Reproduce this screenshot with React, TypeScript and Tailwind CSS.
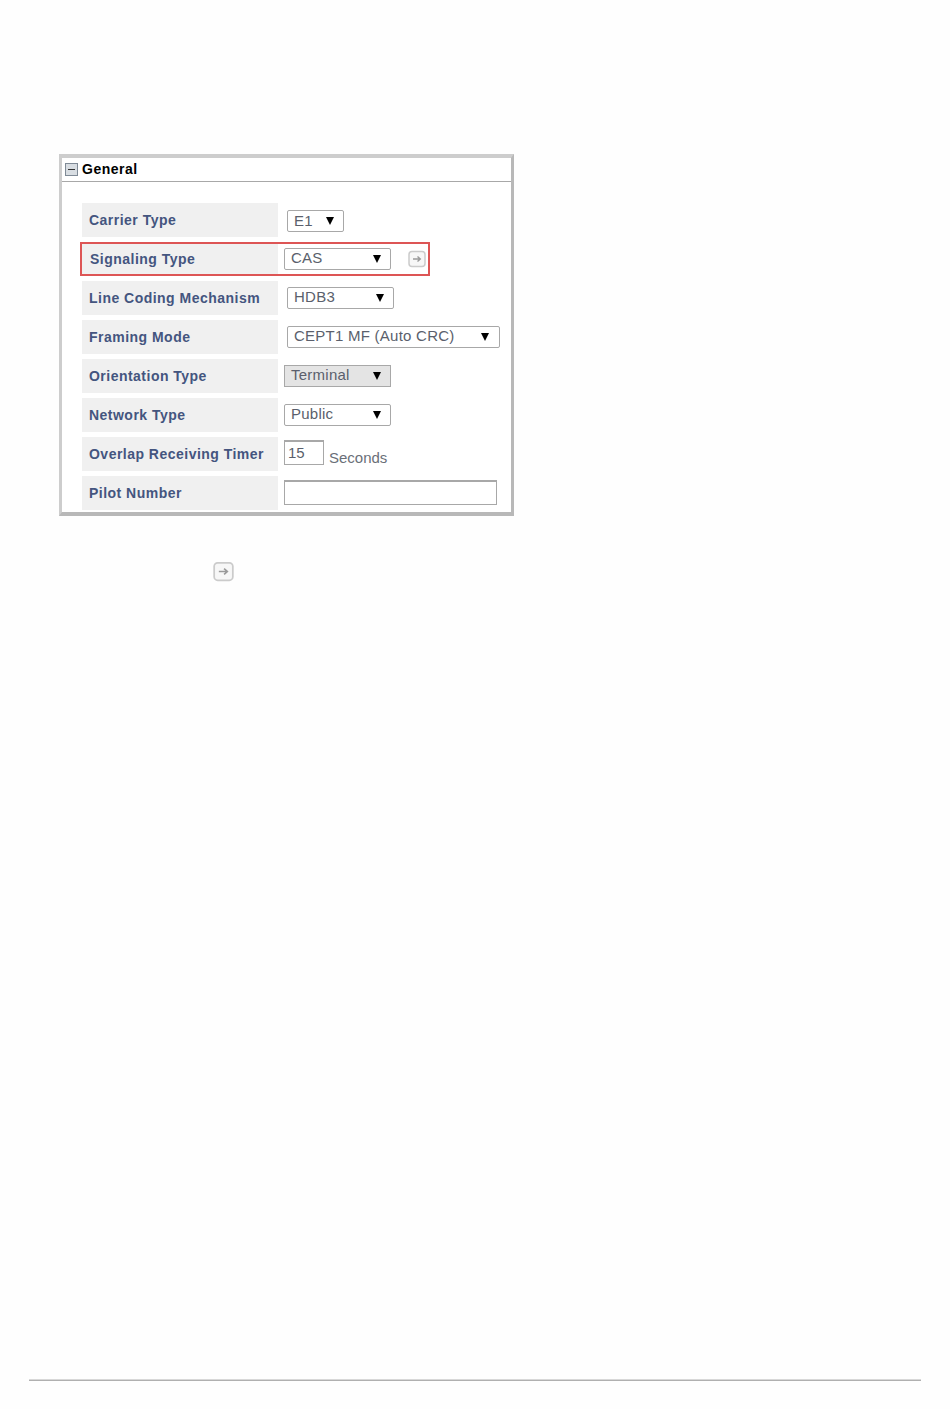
const font = "font-['Liberation_Sans',Arial,sans-serif]";

function Arrow() {
  return <span className="ml-auto w-0 h-0 border-l-[4px] border-r-[4px] border-t-[8px] border-l-transparent border-r-transparent border-t-black" />;
}

function Select({ value, className, textClass = "-mt-[1px]" }: { value: string; className: string; textClass?: string }) {
  return (
    <div className={`h-[22px] flex items-center pl-[6px] border border-[#a8a8a8] rounded-[2px] text-[15px] tracking-[0.25px] text-[#5a5f6c] ${className}`}>
      <span className={textClass}>{value}</span>
      <Arrow />
    </div>
  );
}

function GoIcon({ size, className }: { size: number; className?: string }) {
  return (
    <svg width={size} height={size} viewBox="0 0 18 18" className={className}>
      <rect x="1" y="1.5" width="16" height="15" rx="3" fill="#f7f7f7" stroke="#cbcbcb" strokeWidth="1.5" />
      <path d="M5 9H12M9.5 6.5L12.3 9L9.5 11.5" fill="none" stroke="#9a9a9a" strokeWidth="1.4" />
    </svg>
  );
}

function Row({ label, children, labelClass = "pl-[7px]" }: { label: string; children: React.ReactNode; labelClass?: string }) {
  return (
    <div className="flex h-[34px] items-center">
      <div className={`w-[196px] h-full bg-[#f0f0f0] flex items-center font-bold text-[14px] tracking-[0.48px] text-[#44557f] ${labelClass}`}>
        <span>{label}</span>
      </div>
      {children}
    </div>
  );
}

export default function App() {
  return (
    <div className={`w-[950px] h-[1409px] bg-[#fefefe] pt-[154px] flex flex-col ${font}`}>
      <div className="relative ml-[59px] w-[455px] h-[362px] bg-white border-[4px] border-t-[#cdcdcd] border-l-[#cdcdcd] border-r-[#b8b8b8] border-b-[#b8b8b8] border-r-[3px] border-l-[3px]">
        <div className="h-[24px] flex items-center border-b border-[#a8a8a8] pl-[3px]">
          <span className="w-[13px] h-[13px] mr-[4px] bg-[#d8dde2] border border-[#7f8a96] flex items-center justify-center">
            <span className="w-[7px] h-[1px] bg-[#333]" />
          </span>
          <span className="font-bold text-[14px] tracking-[0.5px] text-black">General</span>
        </div>
        <div className="pl-[20px] pt-[21px] flex flex-col gap-[5px]">
          <Row label="Carrier Type">
            <Select value="E1" className="ml-[9px] mt-[2px] w-[57px] pr-[9px]" textClass="" />
          </Row>
          <Row label="Signaling Type" labelClass="pl-[8px] text-[#4f6090]">
            <Select value="CAS" className="ml-[6px] w-[107px] pr-[9px]" />
            <GoIcon size={18} className="ml-[17px]" />
          </Row>
          <Row label="Line Coding Mechanism">
            <Select value="HDB3" className="ml-[9px] w-[107px] pr-[9px]" />
          </Row>
          <Row label="Framing Mode">
            <Select value="CEPT1 MF (Auto CRC)" className="ml-[9px] w-[213px] pr-[10px]" />
          </Row>
          <Row label="Orientation Type">
            <Select value="Terminal" className="ml-[6px] w-[107px] pr-[9px] bg-[#e4e4e4] rounded-none" />
          </Row>
          <Row label="Network Type">
            <Select value="Public" className="ml-[6px] w-[107px] pr-[9px]" />
          </Row>
          <Row label="Overlap Receiving Timer">
            <div className="ml-[6px] w-[40px] h-[25px] -mt-[3px] border border-t-2 border-[#a8a8a8] pl-[3px] text-[15px] text-[#5a5f6c] leading-[22px]">15</div>
            <span className="ml-[5px] mt-[9px] text-[15px] text-[#6a6f78]">Seconds</span>
          </Row>
          <Row label="Pilot Number">
            <div className="ml-[6px] w-[213px] h-[25px] -mt-[2px] border border-t-2 border-[#a8a8a8]" />
          </Row>
        </div>
        <div className="absolute left-[18px] top-[84px] w-[350px] h-[34px] border-2 border-[#dd5555] pointer-events-none" />
      </div>
      <GoIcon size={21} className="ml-[213px] mt-[45px]" />
      <div className="mt-auto mb-[28px] mx-[29px] h-[2px] bg-[#b0b0b0] border-t border-[#d8d8d8]" />
    </div>
  );
}
